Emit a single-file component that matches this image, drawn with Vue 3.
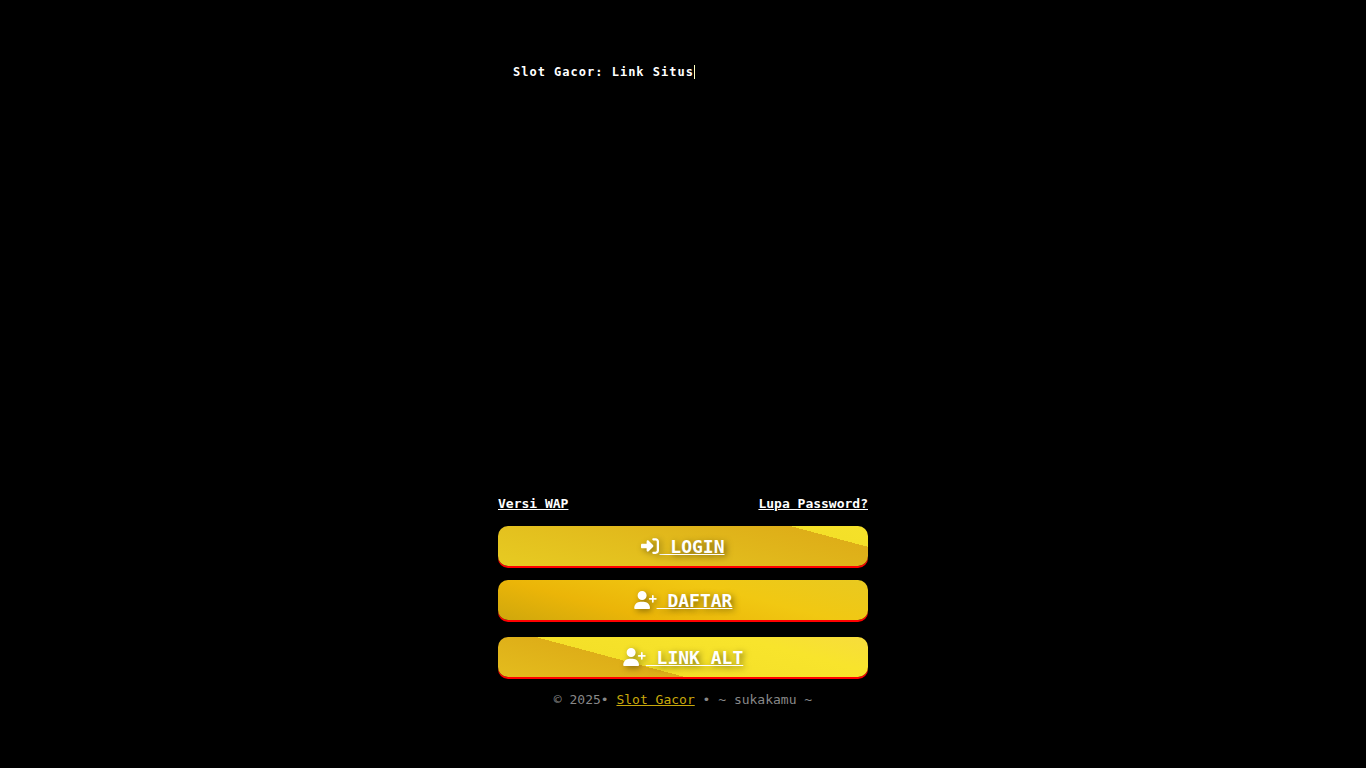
<script setup>
import { ref } from "vue";

const typedText = ref("Slot Gacor: Link Situs");

// Font Awesome shapes used by the buttons
const iconLogin = {
  box: "0 0 512 512",
  path: "M217.9 105.9L340.7 228.7c7.2 7.2 11.3 17.1 11.3 27.3s-4.1 20.1-11.3 27.3L217.9 406.1c-6.4 6.4-15 9.9-24 9.9c-18.7 0-33.9-15.2-33.9-33.9l0-62.1L32 320c-17.7 0-32-14.3-32-32l0-64c0-17.7 14.3-32 32-32l128 0 0-62.1c0-18.7 15.2-33.9 33.9-33.9c9 0 17.6 3.6 24 9.9zM352 416l64 0c17.7 0 32-14.3 32-32l0-256c0-17.7-14.3-32-32-32l-64 0c-17.7 0-32-14.3-32-32s14.3-32 32-32l64 0c53 0 96 43 96 96l0 256c0 53-43 96-96 96l-64 0c-17.7 0-32-14.3-32-32s14.3-32 32-32z",
};
const iconUser = {
  box: "0 0 640 512",
  path: "M96 128a128 128 0 1 1 256 0A128 128 0 1 1 96 128zM0 482.3C0 383.8 79.8 304 178.3 304l91.4 0C368.2 304 448 383.8 448 482.3c0 16.4-13.3 29.7-29.7 29.7L29.7 512C13.3 512 0 498.7 0 482.3zM504 312l0-64-64 0c-13.3 0-24-10.7-24-24s10.7-24 24-24l64 0 0-64c0-13.3 10.7-24 24-24s24 10.7 24 24l0 64 64 0c13.3 0 24 10.7 24 24s-10.7 24-24 24l-64 0 0 64c0 13.3-10.7 24-24 24s-24-10.7-24-24z",
};

const buttons = [
  { name: "login", label: "LOGIN", icon: iconLogin },
  { name: "daftar", label: "DAFTAR", icon: iconUser },
  { name: "link-alt", label: "LINK ALT", icon: iconUser },
];
</script>

<template>
  <main class="container">
    <h1 class="typing"><span class="typed">{{ typedText }}</span></h1>
    <div class="banner"></div>

    <div class="links">
      <a href="#/wap">Versi WAP</a>
      <a href="#/lupa-password">Lupa Password?</a>
    </div>

    <nav class="buttons">
      <a v-for="b in buttons" :key="b.name" class="btn" :class="b.name" :href="'#/' + b.name"><svg class="icon" :class="{ wide: b.icon === iconUser }" :viewBox="b.icon.box" aria-hidden="true"><path :d="b.icon.path" /></svg>&nbsp;{{ b.label }}</a>
    </nav>

    <footer class="footer">
      © 2025• <a href="#/home">Slot Gacor</a> • ~ sukakamu ~
    </footer>
  </main>
</template>

<style>
body {
  margin: 0;
  background: #000;
}
</style>

<style scoped>
.container {
  box-sizing: border-box;
  max-width: 400px;
  margin: 0 auto;
  padding: 65px 15px 0;
  font-family: "DejaVu Sans Mono", monospace;
  color: #fff;
}

.typing {
  display: flex;
  margin: 0;
  padding: 0 15px;
  font-size: 12px;
  line-height: 14px;
  letter-spacing: 1px;
}

.typed {
  border-right: 1px solid #ffffc0;
}

.banner {
  height: 415px;
}

.links {
  display: flex;
  justify-content: space-between;
  font-size: 13px;
  font-weight: bold;
  line-height: 20px;
}

.links a {
  color: #fff;
}

.buttons {
  display: flex;
  flex-direction: column;
  gap: 14px;
  margin-top: 12px;
}

.btn {
  padding-top: 2px;
  border-radius: 10px;
  box-shadow: 0 2px 0 #f00;
  color: #fff;
  font-size: 18px;
  font-weight: bold;
  line-height: 38px;
  text-align: center;
  text-decoration: underline;
  text-shadow: 2px 2px 6px rgba(0, 0, 0, 0.5);
}

.login {
  background: linear-gradient(15deg, #e7cb22, #deae18 85%, #f4e028 85%, #f5e12a);
}

.daftar {
  background: linear-gradient(15deg, #cfa70c, #ebb508 30%, #f1c812 65%, #e9c920);
}

.link-alt {
  margin-top: 3px;
  background: linear-gradient(15deg, #e4bc1d, #deae18 36%, #f4e028 36%, #f8e42c 75%, #f7dc3c);
}

.icon {
  width: 18px;
  height: 18px;
  vertical-align: -2px;
  overflow: visible;
  fill: #fff;
  filter: drop-shadow(2px 2px 3px rgba(0, 0, 0, 0.4));
}

.icon.wide {
  width: 23px;
}

.footer {
  margin-top: 13px;
  color: #888;
  font-size: 13px;
  line-height: 20px;
  text-align: center;
}

.footer a {
  color: #c9a90c;
}
</style>
